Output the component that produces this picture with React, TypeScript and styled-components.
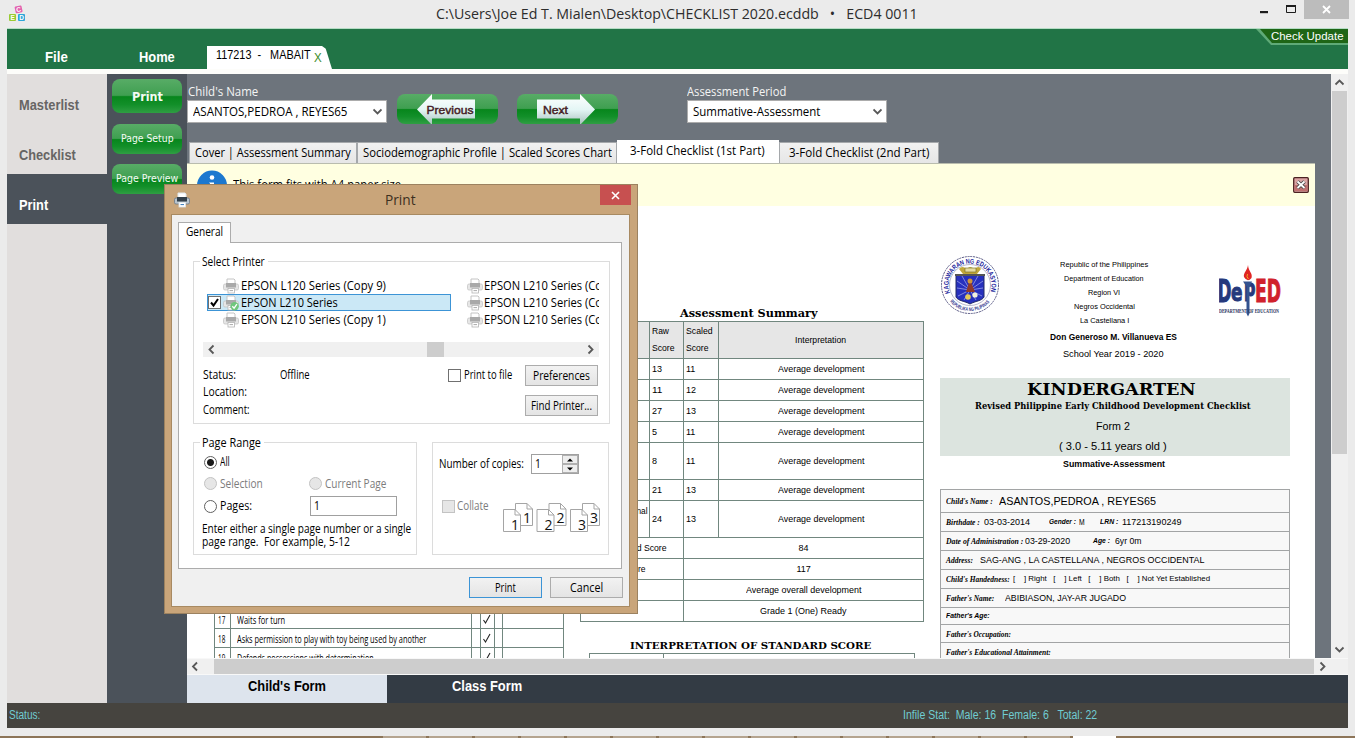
import React, { useLayoutEffect, useRef, useState } from "react";
import styled, { createGlobalStyle, css } from "styled-components";

const UI = `"Open Sans", "Noto Sans", sans-serif`;
const ARIAL = `"Liberation Sans", Arial, sans-serif`;
const SLAB = `"DejaVu Serif", serif`;
const TIMES = `"Liberation Serif", serif`;
const VERDANA = `"DejaVu Sans", sans-serif`;

const Global = createGlobalStyle`
  * { box-sizing: border-box; }
  body { margin: 0; overflow: hidden; background: #ebebeb; font-family: ${UI}; }
`;

/* ---------- text that always takes the given width ---------- */

const FitBox = styled.span<{ $w: number; $size: number; $font: string; $bold?: boolean; $italic?: boolean; $color: string; $ml: number; $y: number }>`
  display: block;
  flex: none;
  width: ${(p) => p.$w}px;
  height: ${(p) => p.$size + 4}px;
  line-height: ${(p) => p.$size + 4}px;
  margin-left: ${(p) => p.$ml}px;
  font-family: ${(p) => p.$font};
  font-size: ${(p) => p.$size}px;
  font-weight: ${(p) => (p.$bold ? 700 : 400)};
  font-style: ${(p) => (p.$italic ? "italic" : "normal")};
  color: ${(p) => p.$color};
  transform: translateY(${(p) => p.$y}px);
`;
const FitInner = styled.span`
  display: inline-block;
  white-space: pre;
  transform-origin: 0 50%;
`;

type FitProps = { w: number; size?: number; font?: string; bold?: boolean; italic?: boolean; color?: string; ml?: number; y?: number; children: string };
function Fit({ w, size = 12, font = UI, bold, italic, color = "#000", ml = 0, y = 0, children }: FitProps) {
  const ref = useRef<HTMLSpanElement>(null);
  const [scale, setScale] = useState(1);
  useLayoutEffect(() => {
    if (ref.current) setScale(w / ref.current.offsetWidth);
  }, [w, children]);
  return (
    <FitBox $w={w} $size={size} $font={font} $bold={bold} $italic={italic} $color={color} $ml={ml} $y={y}>
      <FitInner ref={ref} style={{ transform: `scaleX(${scale})` }}>{children}</FitInner>
    </FitBox>
  );
}

const Gap = styled.span<{ $w: number }>`
  flex: none;
  width: ${(p) => p.$w}px;
`;

/* ---------- window frame ---------- */

const Window = styled.div`
  width: 1355px;
  height: 738px;
  display: flex;
  flex-direction: column;
  background: #ebebeb;
  position: relative;
  overflow: hidden;
`;
const TitleBar = styled.header`
  height: 28px;
  flex: none;
  display: flex;
  padding: 0 6px 0 8px;
`;
const TitleText = styled.div`
  display: flex;
  align-items: center;
  padding-left: 409px;
`;
const AppLogo = styled.svg`
  width: 19px;
  height: 18px;
  margin-top: 5px;
`;
const WindowButtons = styled.div`
  display: flex;
  height: 19px;
  margin-left: auto;
`;
const Chrome = styled.svg`
  width: 44px;
  height: 19px;
`;
const CloseBox = styled.div`
  width: 45px;
  background: #bcbcbc;
  display: flex;
  align-items: center;
  justify-content: center;
`;
const Client = styled.div`
  margin: 0 7px;
  width: 1341px;
  flex: none;
  display: flex;
  flex-direction: column;
`;
const Ribbon = styled.nav`
  height: 41px;
  border-top: 1px solid #b5dcc4;
  background: #217446;
  display: flex;
  align-items: flex-end;
`;
const DocTab = styled.div`
  width: 125px;
  height: 23px;
  margin-left: 32px;
  background: #fff;
  clip-path: polygon(0 0, 92% 0, 95% 12%, 100% 100%, 0 100%);
  display: flex;
  align-items: flex-start;
  padding-left: 9px;
`;
const UpdateTag = styled.div`
  align-self: flex-start;
  margin-left: auto;
  width: 92px;
  height: 16px;
  background: #5faa77;
  clip-path: polygon(0 0, 100% 0, 100% 100%, 15px 100%);
`;
const UpdateInner = styled.div`
  height: 14px;
  background: #1e6516;
  clip-path: polygon(4px 0, 100% 0, 100% 100%, 16px 100%);
  padding-left: 15px;
  display: flex;
  align-items: center;
`;
const Body = styled.div`
  margin-top: 5px;
  height: 629px;
  display: flex;
  position: relative;
  &::before { content: ""; position: absolute; left: 0; right: 0; top: -5px; height: 5px; background: #fdfdfa; }
`;

/* ---------- left navigation ---------- */

const Sidebar = styled.aside`
  width: 100px;
  background: #e1dedd;
`;
const NavItem = styled.div<{ $active?: boolean }>`
  height: 50px;
  padding: 10px 0 0 12px;
  display: flex;
  align-items: center;
  ${(p) => p.$active && css`background: #4b525a;`}
`;
const Tools = styled.div`
  width: 80px;
  background: #4b525a;
  padding: 5px;
`;
const glossy = css`
  background: linear-gradient(#58ac66 0%, #3f9f51 48%, #07861c 52%, #128f29 75%, #2f9e43 100%);
  border-radius: 8px;
`;
const ToolButton = styled.button<{ $h: number; $gap: number }>`
  ${glossy}
  border: 0;
  padding: 0;
  width: 70px;
  height: ${(p) => p.$h}px;
  margin-bottom: ${(p) => p.$gap}px;
  display: flex;
  align-items: center;
  justify-content: center;
`;

/* ---------- workspace ---------- */

const Work = styled.main`
  width: 1161px;
  display: flex;
  flex-direction: column;
`;
const Viewport = styled.div`
  height: 584px;
  display: flex;
`;
const Canvas = styled.div`
  width: 1144px;
  background: #6d747c;
`;
const Filters = styled.div`
  height: 66px;
  display: flex;
`;
const Field = styled.label<{ $ml?: number }>`
  width: 200px;
  padding-top: 10px;
  margin-left: ${(p) => p.$ml ?? 0}px;
  display: flex;
  flex-direction: column;
`;
const Combo = styled.div`
  height: 23px;
  background: #fff;
  border: 1px solid #acacac;
  display: flex;
  align-items: center;
  justify-content: space-between;
  padding: 0 4px 0 5px;
`;
const ArrowButton = styled.button<{ $ml: number }>`
  ${glossy}
  border: 0;
  padding: 0;
  width: 101px;
  height: 30px;
  margin: 20px 0 0 ${(p) => p.$ml}px;
`;
const Tabs = styled.div`
  height: 23px;
  display: flex;
  align-items: flex-end;
  padding-left: 2px;
`;
const Tab = styled.div<{ $w: number; $active?: boolean }>`
  width: ${(p) => p.$w}px;
  height: ${(p) => (p.$active ? 23 : 21)}px;
  background: ${(p) => (p.$active ? "#fff" : "linear-gradient(#f1f1f1,#e6e6e6)")};
  border: 1px solid ${(p) => (p.$active ? "#fff" : "#a5a8ab")};
  border-bottom: 0;
  display: flex;
  align-items: center;
  justify-content: center;
  padding: ${(p) => (p.$active ? "0 2px 3px 0" : "0")};
`;
const Sheet = styled.section`
  width: 1128px;
  height: 495px;
  background: #fff;
  overflow: hidden;
`;
const Notice = styled.div`
  height: 43px;
  background: #ffffe1;
  border-top: 1px solid #b9bcae;
  display: flex;
  padding: 6px 6px 0 9px;
`;
const NoticeClose = styled.svg`
  width: 16px;
  height: 16px;
  margin: 7px 0 0 auto;
`;
const Columns = styled.div`
  display: flex;
  align-items: flex-start;
`;

const VScroll = styled.div`
  width: 17px;
  height: 584px;
  background: #f0f0f0;
  display: flex;
  flex-direction: column;
  align-items: center;
`;
const VThumb = styled.div`
  width: 15px;
  height: 363px;
  background: #cdcdcd;
`;
const Arrow = styled.svg<{ $w: number; $h: number }>`
  width: ${(p) => p.$w}px;
  height: ${(p) => p.$h}px;
  flex: none;
  display: block;
`;
const HScroll = styled.div`
  height: 17px;
  background: #f0f0f0;
  border-top: 1px solid #f8f8f8;
  border-bottom: 1px solid #f8f8f8;
  display: flex;
`;
const HThumb = styled.div`
  width: 1100px;
  background: #cdcdcd;
`;
const BottomTabs = styled.div`
  height: 28px;
  background: #333b44;
  display: flex;
`;
const BottomTab = styled.div<{ $active?: boolean }>`
  width: 200px;
  padding-top: 2px;
  display: flex;
  justify-content: center;
  background: ${(p) => (p.$active ? "#dde4ed" : "#333b44")};
`;
const StatusBar = styled.footer`
  height: 25px;
  background: #46443f;
  display: flex;
  align-items: center;
  padding-left: 2px;
`;
const Taskbar = styled.div`
  margin-top: auto;
  height: 2px;
  background: #8d7558;
  padding-left: 383px;
  display: flex;
  gap: 3px;
`;
const TaskItem = styled.i<{ $on?: boolean }>`
  width: 43px;
  background: ${(p) => (p.$on ? "#fff" : "#b5a48f")};
`;

/* ---------- checklist columns ---------- */

const line = "1px solid #71877f";
const SkillTable = styled.div`
  width: 350px;
  margin: 404px 0 0 27px;
  border-left: ${line};
`;
const SkillRow = styled.div`
  height: 19px;
  display: flex;
  border-bottom: ${line};
`;
const SkillCell = styled.div<{ $w: number }>`
  width: ${(p) => p.$w}px;
  border-right: ${line};
  display: flex;
  align-items: center;
  flex: none;
  overflow: hidden;
`;
const Summary = styled.div`
  width: 344px;
  margin-left: 16px;
  padding-top: 98px;
  display: flex;
  flex-direction: column;
`;
const ScoreTable = styled.div`
  border: ${line};
  border-bottom: 0;
  border-right: 0;
`;
const ScoreRow = styled.div<{ $h: number; $head?: boolean }>`
  height: ${(p) => p.$h}px;
  display: flex;
  border-bottom: ${line};
  background: ${(p) => (p.$head ? "#e6e6e6" : "#fff")};
`;
const ScoreCell = styled.div<{ $w: number; $end?: boolean; $left?: boolean }>`
  width: ${(p) => p.$w}px;
  border-right: ${line};
  display: flex;
  flex-direction: column;
  justify-content: center;
  gap: 4px;
  align-items: ${(p) => (p.$left ? "flex-start" : p.$end ? "flex-end" : "center")};
  padding: ${(p) => (p.$left ? "0 0 0 2px" : p.$end ? "0 1px 0 0" : "0")};
`;
const StandardTable = styled.div`
  width: 326px;
  height: 20px;
  margin-left: 9px;
  border: ${line};
`;
const StandardSplit = styled.div`
  width: 74px;
  height: 20px;
  border-right: ${line};
`;
const Profile = styled.div`
  width: 350px;
  margin-left: 16px;
  padding-top: 49px;
`;
const Letterhead = styled.div`
  height: 123px;
  display: flex;
  align-items: flex-start;
`;
const LetterLines = styled.div`
  width: 208px;
  padding-top: 3px;
  display: flex;
  flex-direction: column;
  align-items: center;
`;
const Line = styled.div<{ $h: number }>`
  height: ${(p) => p.$h}px;
  display: flex;
  align-items: center;
`;
const Banner = styled.div`
  height: 78px;
  background: #dce4df;
  display: flex;
  flex-direction: column;
  align-items: center;
  padding: 1px 0 0 0;
`;
const Period = styled.div`
  height: 33px;
  display: flex;
  justify-content: center;
  padding-top: 2px;
`;
const InfoTable = styled.div`
  border: 1px solid #a2a4a5;
  background: #f8f8f8;
`;
const InfoRow = styled.div<{ $h: number }>`
  height: ${(p) => p.$h}px;
  border-bottom: 1px solid #a2a4a5;
  display: flex;
  align-items: center;
  padding-left: 5px;
`;

/* ---------- print dialog ---------- */

const Dialog = styled.div`
  position: absolute;
  left: 164px;
  top: 184px;
  width: 474px;
  height: 430px;
  background: #c9a57a;
  border: 1px solid #9c8260;
  padding: 0 7px 7px 6px;
  z-index: 2;
`;
const DialogTitle = styled.div`
  height: 29px;
  display: flex;
`;
const DialogClose = styled.div`
  width: 31px;
  height: 20px;
  margin-left: auto;
  margin-right: -1px;
  background: #c75050;
  display: flex;
  align-items: center;
  justify-content: center;
`;
const DialogBody = styled.div`
  height: 393px;
  background: #f0f0f0;
  border: 1px solid #a88a62;
  padding: 7px 6px 0 6px;
`;
const GeneralTab = styled.div`
  width: 53px;
  height: 21px;
  background: #fff;
  border: 1px solid #acacac;
  border-bottom: 0;
  position: relative;
  z-index: 1;
  margin-bottom: -1px;
  padding: 1px 0 0 7px;
`;
const Pane = styled.div`
  width: 444px;
  height: 327px;
  background: #fff;
  border: 1px solid #acacac;
  padding: 18px 0 0 14px;
`;
const Group = styled.fieldset<{ $w: number; $h: number }>`
  position: relative;
  margin: 0;
  min-width: 0;
  padding: 0;
  width: ${(p) => p.$w}px;
  height: ${(p) => p.$h}px;
  border: 1px solid #dcdcdc;
`;
const GroupLabel = styled.div`
  position: absolute;
  left: 6px;
  top: -8px;
  background: #fff;
  padding-right: 3px;
`;
const PrinterList = styled.div`
  margin: 15px 0 0 9px;
  width: 396px;
  height: 52px;
  display: flex;
  gap: 11px;
  overflow: hidden;
`;
const PrinterColumn = styled.div`
  width: 248px;
  flex: none;
`;
const Printer = styled.div<{ $on?: boolean; $ind: number }>`
  height: 17px;
  margin-left: 4px;
  width: 244px;
  display: flex;
  align-items: center;
  padding-left: ${(p) => p.$ind}px;
  border: 1px solid ${(p) => (p.$on ? "#3c94d6" : "transparent")};
  background: ${(p) => (p.$on ? "#cbe8f6" : "none")};
`;
const ListScroll = styled.div`
  margin: 13px 0 0 9px;
  width: 396px;
  height: 15px;
  background: #f0f0f0;
  display: flex;
`;
const ListThumb = styled.div`
  width: 17px;
  margin: 0 auto 0 207px;
  background: #cdcdcd;
`;
const StatusArea = styled.div`
  display: flex;
  margin: 8px 0 0 9px;
`;
const StatusColumn = styled.div<{ $w: number }>`
  width: ${(p) => p.$w}px;
`;
const Check = styled.span<{ $off?: boolean }>`
  width: 13px;
  height: 13px;
  flex: none;
  border: 1px solid ${(p) => (p.$off ? "#c3c3c3" : "#707070")};
  background: ${(p) => (p.$off ? "#e6e6e6" : "#fff")};
  display: flex;
`;
const Radio = styled.span<{ $off?: boolean; $on?: boolean }>`
  width: 13px;
  height: 13px;
  flex: none;
  border-radius: 50%;
  border: 1px solid ${(p) => (p.$off ? "#c3c3c3" : "#606060")};
  background: ${(p) => (p.$off ? "#e6e6e6" : p.$on ? "radial-gradient(#1a1a1a 0 3px, #fff 4px)" : "#fff")};
`;
const PushButton = styled.button<{ $primary?: boolean }>`
  width: 73px;
  height: 21px;
  padding: 0;
  flex: none;
  border: 1px solid ${(p) => (p.$primary ? "#3c94d6" : "#acacac")};
  background: linear-gradient(#f2f2f2, #e4e4e4);
  display: flex;
  align-items: center;
  justify-content: center;
`;
const ButtonStack = styled.div`
  display: flex;
  flex-direction: column;
  gap: 9px;
`;
const Lower = styled.div`
  margin-top: 18px;
  display: flex;
  gap: 15px;
`;
const Option = styled.div<{ $h: number; $pl?: number }>`
  height: ${(p) => p.$h}px;
  display: flex;
  align-items: center;
  padding-left: ${(p) => p.$pl ?? 0}px;
`;
const TextInput = styled.div<{ $w: number; $ml: number }>`
  width: ${(p) => p.$w}px;
  height: 20px;
  margin-left: ${(p) => p.$ml}px;
  border: 1px solid #a0a0a0;
  background: #fff;
  display: flex;
  align-items: center;
  padding-left: 3px;
`;
const Spinner = styled.div`
  width: 16px;
  height: 18px;
  margin: 0 0 0 auto;
  display: flex;
  flex-direction: column;
`;
const SpinKey = styled.div`
  flex: 1;
  border: 1px solid #b0b0b0;
  background: #eee;
  display: flex;
  align-items: center;
  justify-content: center;
`;
const Pages = styled.svg`
  width: 98px;
  height: 32px;
  margin: 24px 0 0 14px;
`;
const Actions = styled.div`
  margin-top: 8px;
  display: flex;
  justify-content: flex-end;
  gap: 8px;
`;

/* ---------- drawings ---------- */

const Chevron = ({ dir, w, h }: { dir: "u" | "d" | "l" | "r"; w: number; h: number }) => {
  const d = { u: "M-4 2L0 -2L4 2", d: "M-4 -2L0 2L4 -2", l: "M2 -4L-2 0L2 4", r: "M-2 -4L2 0L-2 4" }[dir];
  return (
    <Arrow $w={w} $h={h} viewBox={`${-w / 2} ${-h / 2} ${w} ${h}`}>
      <path d={d} fill="none" stroke="#585858" strokeWidth="1.800" />
    </Arrow>
  );
};

const PrinterIcon = ({ dark, ok }: { dark?: boolean; ok?: boolean }) => {
  const body = dark ? "#6c7a86" : "#c5c5c5";
  return (
    <Arrow $w={16} $h={16} viewBox="0 0 16 16">
      <path d="M4 5V1h7l1 1v3" fill="#fff" stroke={dark ? "#dfe6ec" : "#c4c4c4"} />
      <rect x="0.5" y="6" width="15" height="6" rx="1.5" fill={dark ? "#b9c4cd" : "#e6e6e6"} stroke={body} strokeWidth=".8" />
      <rect x="3" y="5" width="10" height="4.5" fill={dark ? "#33404b" : "#a9a9a9"} />
      <rect x="5" y="10.5" width="6.5" height="4.5" fill="#fff" stroke={dark ? "#dfe6ec" : "#b4b4b4"} strokeWidth=".8" />
      <path d="M6.5 12.6h3.5" stroke={dark ? "#3477b5" : "#aaa"} />
      {ok && <circle cx="11.6" cy="11.3" r="4.2" fill="#6fc67c" />}
      {ok && <path d="M9.3 11.2l1.8 2 2.8-4" fill="none" stroke="#fff" strokeWidth="1.3" />}
    </Arrow>
  );
};

const ArrowLabel = ({ text, flip }: { text: string; flip?: boolean }) => (
  <Arrow $w={101} $h={30} viewBox="0 0 101 30">
    <defs>
      <linearGradient id={flip ? "silverR" : "silverL"} x1="0" x2="0" y1="0" y2="1">
        <stop offset="0" stopColor="#fff" />
        <stop offset=".5" stopColor="#e4f6f5" />
        <stop offset="1" stopColor="#a8bfbc" />
      </linearGradient>
    </defs>
    <path
      d={flip ? "M20 5.5H63V0L78 15.5L63 31V24.500H20Z" : "M20 15.5L35 0V5.500H78V24.500H35V31Z"}
      fill={`url(#${flip ? "silverR" : "silverL"})`}
    />
    <text x={flip ? 26 : 29.5} y="20" fontFamily={ARIAL} fontSize="11.500" textLength={flip ? 25 : 47} lengthAdjust="spacingAndGlyphs" fill="#451b24" stroke="#451b24" strokeWidth=".45">{text}</text>
  </Arrow>
);

const Seal = () => (
  <Arrow $w={60} $h={60} viewBox="0 0 60 60">
    <defs>
      <path id="sealTop" d="M10 37.900A21.500 21.500 0 1 1 50 37.900" />
      <path id="sealBottom" d="M10 46.600A26 26 0 0 0 50 46.600" />
    </defs>
    <circle cx="30" cy="30" r="28.500" fill="#fff" stroke="#5b5b86" strokeWidth="1" strokeDasharray="2 .8" />
    <circle cx="30" cy="30" r="20.500" fill="#fff" stroke="#8888ab" strokeWidth=".6" />
    <text fontFamily={ARIAL} fontWeight="700" fontSize="6.800" fill="#1b1e9c"><textPath href="#sealTop" textLength="82" lengthAdjust="spacingAndGlyphs">KAGAWARAN NG EDUKASYON</textPath></text>
    <text fontFamily={ARIAL} fontWeight="700" fontSize="5" fill="#34388e"><textPath href="#sealBottom" textLength="45" lengthAdjust="spacingAndGlyphs">REPUBLIKA NG PILIPINAS</textPath></text>
    <path d="M16 20H44V42C42 46 35 46 30 49C25 46 18 46 16 42Z" fill="#2730bd" stroke="#222a66" />
    <path d="M30 35L17 26M30 35L22 21M30 35L38 21M30 35L43 26M30 35L17 33M30 35L43 33M30 35L18 41M30 35L24 45M30 35L36 45M30 35L42 41" stroke="#a9b1ee" strokeWidth=".7" />
    <path d="M19 14Q22 10 27 14Q30 10 34 14Q39 10 41 14L37 19H23Z" fill="#c2a83a" />
    <path d="M25 13h11v4h-11z" fill="#e6dca0" stroke="#6c6420" strokeWidth=".6" />
    <path d="M26 37L30 24L35 37Z" fill="#8f3a2c" />
    <circle cx="30" cy="26" r="2.500" fill="#d0963a" />
    <circle cx="28" cy="42" r="2.800" fill="#e5ca58" />
    <circle cx="35" cy="40" r="2.600" fill="#f2f0dd" />
    <path d="M15 20H45" stroke="#555" strokeWidth="2" />
  </Arrow>
);

const DepEd = () => (
  <Arrow $w={62} $h={54} viewBox="0 0 62 54">
    <g fontFamily={VERDANA} fontWeight="700" strokeWidth="1">
      <text x="-1.500" y="37.500" fontSize="31.500" textLength="14" lengthAdjust="spacingAndGlyphs" fill="#25397c" stroke="#25397c">D</text>
      <text x="12" y="37" fontSize="25" textLength="11.500" lengthAdjust="spacingAndGlyphs" fill="#25397c" stroke="#25397c">e</text>
      <text x="25" y="32" fontSize="23" textLength="11.500" lengthAdjust="spacingAndGlyphs" fill="#25397c" stroke="#25397c">p</text>
      <text x="36" y="37.500" fontSize="31.500" textLength="26" lengthAdjust="spacingAndGlyphs" fill="#d0212c" stroke="#d0212c">ED</text>
    </g>
    <path d="M24 17.500h9l-2.500 5v27l-1.500 3-1.500-3V22.500Z" fill="#33538f" />
    <path d="M29 1C28.500 6 24 9 25 13Q28.500 19 32.500 14C34 9 29.500 8 29 1Z" fill="#e02524" />
    <path d="M28.500 10Q27 13 29.500 15" stroke="#f5a623" fill="none" />
    <text x="0" y="48.500" fontFamily={TIMES} fontWeight="700" fontSize="7" textLength="60" lengthAdjust="spacingAndGlyphs" fill="#26315c">DEPARTMENT OF EDUCATION</text>
  </Arrow>
);

const PAGE_SETS = [1, 2, 3];
const PageStack = () => (
  <Pages viewBox="0 0 98 32">
    {PAGE_SETS.map((n, i) => (
      <g key={n} transform={`translate(${i * 33.500} 0)`} fill="#fff" stroke="#a5a5a5">
        <path d="M12.500 1.500H24L29.500 7V23.500H12.500Z" />
        <path d="M24 1.500V7H29.500" fill="none" />
        <text x="20" y="21" fontFamily={UI} fontSize="14" fill="#111" stroke="none">{n}</text>
        <path d="M.5 7.500H12L17.500 13V29.500H.5Z" />
        <path d="M12 7.500V13H17.500" fill="none" />
        <text x="8" y="27.500" fontFamily={UI} fontSize="14" fill="#111" stroke="none">{n}</text>
      </g>
    ))}
  </Pages>
);

/* ---------- data ---------- */

const SKILLS: [string, string, number][] = [
  ["17", "Waits for turn", 48],
  ["18", "Asks permission to play with toy being used by another", 189],
  ["19", "Defends possessions with determination", 137],
];
const SCORES: [number, string, string, string][] = [
  [21, "", "13", "11"],
  [21, "", "11", "12"],
  [21, "", "27", "13"],
  [21, "", "5", "11"],
  [37, "", "8", "11"],
  [21, "", "21", "13"],
  [37, "Socio-emotional", "24", "13"],
];
const TOTALS: [string, number, number, string, number][] = [
  ["Sum of Scaled Score", 82, 2, "84", 10],
  ["Standard Score", 60, 3, "117", 14],
  ["", 0, 0, "Average overall development", 115],
  ["", 0, 0, "Grade 1 (One) Ready", 87],
];

const SmallKey = (p: { w: number; children: string }) => <Fit w={p.w} size={8} font={TIMES} bold italic y={1}>{p.children}</Fit>;

export default function App() {
  return (
    <Window>
      <Global />
      <TitleBar>
        <AppLogo viewBox="0 0 19 18">
          <g fontFamily={ARIAL} fontWeight="700" fontSize="6.500" fill="#fff">
            <rect x="7" y="1" width="7" height="7" rx="1" fill="#e262ae" transform="rotate(-12 10 4)" />
            <text x="8" y="7" transform="rotate(-12 10 4)">C</text>
            <rect x="1" y="9" width="7" height="7" rx="1" fill="#9bcb33" />
            <text x="2.500" y="15">E</text>
            <rect x="10" y="9" width="7" height="7" rx="1" fill="#2ca6d9" />
            <text x="11.200" y="15">D</text>
          </g>
        </AppLogo>
        <TitleText>
          <Fit w={482} size={15} color="#2d2d2d" y={-1}>{"C:\\Users\\Joe Ed T. Mialen\\Desktop\\CHECKLIST 2020.ecddb   •   ECD4 0011"}</Fit>
        </TitleText>
        <WindowButtons>
          <Chrome viewBox="0 0 44 19">
            <rect x="0" y="11" width="8" height="2.200" fill="#1c1c1c" />
            <path d="M26.500 6V12.500H35.500V6" fill="none" stroke="#1c1c1c" />
            <rect x="26" y="5" width="10" height="2" fill="#1c1c1c" />
          </Chrome>
          <CloseBox>
            <Arrow $w={9} $h={9} viewBox="0 0 9 9"><path d="M1 1L8 8M8 1L1 8" stroke="#fff" strokeWidth="1.800" /></Arrow>
          </CloseBox>
        </WindowButtons>
      </TitleBar>

      <Client>
        <Ribbon>
          <Fit w={23} size={15} font={ARIAL} bold color="#fff" ml={38} y={-3}>File</Fit>
          <Fit w={36} size={15} font={ARIAL} bold color="#fff" ml={71} y={-3}>Home</Fit>
          <DocTab>
            <Fit w={95} size={12} font={ARIAL} y={1}>{"117213  -   MABAIT"}</Fit>
            <Fit w={8} size={13} font={ARIAL} color="#3e8e2c" ml={3} y={3}>X</Fit>
          </DocTab>
          <UpdateTag>
            <UpdateInner><Fit w={73} size={10.500} font={ARIAL} color="#fff">Check Update</Fit></UpdateInner>
          </UpdateTag>
        </Ribbon>

        <Body>
          <Sidebar>
            <NavItem><Fit w={60} size={15} font={ARIAL} bold color="#676564">Masterlist</Fit></NavItem>
            <NavItem><Fit w={57} size={15} font={ARIAL} bold color="#676564">Checklist</Fit></NavItem>
            <NavItem $active><Fit w={29} size={15} font={ARIAL} bold color="#fff">Print</Fit></NavItem>
          </Sidebar>
          <Tools>
            <ToolButton $h={34} $gap={11}><Fit w={31} size={13} font={VERDANA} bold color="#f4fbf4">Print</Fit></ToolButton>
            <ToolButton $h={30} $gap={10}><Fit w={53} size={10} font={VERDANA} color="#f4fbf4">Page Setup</Fit></ToolButton>
            <ToolButton $h={30} $gap={0}><Fit w={62} size={10} font={VERDANA} color="#f4fbf4">Page Preview</Fit></ToolButton>
          </Tools>

          <Work>
            <Viewport>
              <Canvas>
                <Filters>
                  <Field>
                    <Fit w={70} size={12} color="#f4f4f4" ml={1}>Child's Name</Fit>
                    <Combo><Fit w={154} size={12}>ASANTOS,PEDROA , REYES65</Fit><Chevron dir="d" w={9} h={9} /></Combo>
                  </Field>
                  <ArrowButton $ml={10}><ArrowLabel text="Previous" /></ArrowButton>
                  <ArrowButton $ml={19}><ArrowLabel text="Next" flip /></ArrowButton>
                  <Field $ml={69}>
                    <Fit w={99} size={12} color="#f4f4f4">Assessment Period</Fit>
                    <Combo><Fit w={127} size={12}>Summative-Assessment</Fit><Chevron dir="d" w={9} h={9} /></Combo>
                  </Field>
                </Filters>
                <Tabs>
                  <Tab $w={168}><Fit w={156} size={12}>Cover | Assessment Summary</Fit></Tab>
                  <Tab $w={260}><Fit w={249} size={12}>Sociodemographic Profile | Scaled Scores Chart</Fit></Tab>
                  <Tab $w={162} $active><Fit w={135} size={12}>3-Fold Checklist (1st Part)</Fit></Tab>
                  <Tab $w={160}><Fit w={140} size={12}>3-Fold Checklist (2nd Part)</Fit></Tab>
                </Tabs>
                <Sheet>
                  <Notice>
                    <Arrow $w={32} $h={32} viewBox="0 0 32 32">
                      <circle cx="16" cy="15.500" r="15" fill="#1c78cf" />
                      <circle cx="16" cy="7.500" r="2.300" fill="#fff" />
                      <path d="M13 12.500h5v10h-4v-9z" fill="#fff" />
                    </Arrow>
                    <Fit w={168} size={13} ml={5} y={6}>This form fits with A4 paper size</Fit>
                    <NoticeClose viewBox="0 0 16 16">
                      <rect x=".7" y=".7" width="14.600" height="14.600" rx="1" fill="#dba3a3" stroke="#4c2222" strokeWidth="1.300" />
                      <path d="M1.500 8h13v6h-13z" fill="#c07070" />
                      <path d="M4.500 4.500L11.500 11M11.500 4.500L4.500 11" stroke="#444" strokeWidth="3.600" />
                      <path d="M4.500 4.500L11.500 11M11.500 4.500L4.500 11" stroke="#fff" strokeWidth="1.800" />
                    </NoticeClose>
                  </Notice>
                  <Columns>
                    <SkillTable>
                      {SKILLS.map(([n, label, w]) => (
                        <SkillRow key={n}>
                          <SkillCell $w={16}><Fit w={7} size={10} ml={3} y={1}>{n}</Fit></SkillCell>
                          <SkillCell $w={241}><Fit w={w} size={10} ml={6} y={1}>{label}</Fit></SkillCell>
                          <SkillCell $w={9} />
                          <SkillCell $w={14}>
                            <Arrow $w={12} $h={12} viewBox="0 0 12 12"><path d="M2.500 7l2 3L9 2" fill="none" stroke="#222" strokeWidth="1.100" /></Arrow>
                          </SkillCell>
                          <SkillCell $w={8} />
                          <SkillCell $w={61} />
                        </SkillRow>
                      ))}
                    </SkillTable>

                    <Summary>
                      <Line $h={17}><Fit w={138} size={11.500} font={SLAB} bold ml={100} y={1}>Assessment Summary</Fit></Line>
                      <ScoreTable>
                        <ScoreRow $h={37} $head>
                          <ScoreCell $w={69} />
                          <ScoreCell $w={34} $left><Fit w={17} size={9} font={ARIAL}>Raw</Fit><Fit w={23} size={9} font={ARIAL}>Score</Fit></ScoreCell>
                          <ScoreCell $w={35} $left><Fit w={27} size={9} font={ARIAL}>Scaled</Fit><Fit w={23} size={9} font={ARIAL}>Score</Fit></ScoreCell>
                          <ScoreCell $w={205}><Fit w={51} size={9} font={ARIAL} ml={-2}>Interpretation</Fit></ScoreCell>
                        </ScoreRow>
                        {SCORES.map(([h, name, raw, scaled], i) => (
                          <ScoreRow $h={h} key={i}>
                            <ScoreCell $w={69} $end>{name && <Fit w={60} size={9} font={ARIAL} y={-8}>{name}</Fit>}</ScoreCell>
                            <ScoreCell $w={34} $left><Fit w={raw.length * 5} size={9} font={ARIAL}>{raw}</Fit></ScoreCell>
                            <ScoreCell $w={35} $left><Fit w={scaled === "11" ? 9 : 10} size={9} font={ARIAL}>{scaled}</Fit></ScoreCell>
                            <ScoreCell $w={205}><Fit w={86} size={9} font={ARIAL}>Average development</Fit></ScoreCell>
                          </ScoreRow>
                        ))}
                        {TOTALS.map(([name, w, ml, value, vw], i) => (
                          <ScoreRow $h={21} key={i}>
                            <ScoreCell $w={103} $left>{name && <Fit w={w} size={9} font={ARIAL} ml={ml}>{name}</Fit>}</ScoreCell>
                            <ScoreCell $w={240}><Fit w={vw} size={9} font={ARIAL}>{value}</Fit></ScoreCell>
                          </ScoreRow>
                        ))}
                      </ScoreTable>
                      <Line $h={31}><Fit w={241} size={10} font={SLAB} bold ml={50} y={8}>INTERPRETATION OF STANDARD SCORE</Fit></Line>
                      <StandardTable><StandardSplit /></StandardTable>
                    </Summary>

                    <Profile>
                      <Letterhead>
                        <Seal />
                        <LetterLines>
                          <Line $h={14}><Fit w={88} size={8} font={ARIAL}>Republic of the Philippines</Fit></Line>
                          <Line $h={14}><Fit w={80} size={8} font={ARIAL}>Department of Education</Fit></Line>
                          <Line $h={14}><Fit w={32} size={8} font={ARIAL}>Region VI</Fit></Line>
                          <Line $h={14}><Fit w={61} size={8} font={ARIAL}>Negros Occidental</Fit></Line>
                          <Line $h={14}><Fit w={49} size={8} font={ARIAL}>La Castellana I</Fit></Line>
                          <Line $h={18}><Fit w={127} size={9} font={ARIAL} bold ml={18}>Don Generoso M. Villanueva ES</Fit></Line>
                          <Line $h={17}><Fit w={101} size={9} font={ARIAL} ml={18}>School Year 2019 - 2020</Fit></Line>
                        </LetterLines>
                        <Line $h={72}><Gap $w={11} /><DepEd /></Line>
                      </Letterhead>
                      <Banner>
                        <Fit w={169} size={17.500} font={SLAB} bold ml={-7}>KINDERGARTEN</Fit>
                        <Fit w={276} size={9} font={SLAB} bold ml={-4} y={-1}>Revised Philippine Early Childhood Development Checklist</Fit>
                        <Line $h={20}><Fit w={34} size={11} font={ARIAL} ml={-4} y={3}>Form 2</Fit></Line>
                        <Line $h={20}><Fit w={108} size={11} font={ARIAL} ml={-4} y={3}>( 3.0 - 5.11 years old )</Fit></Line>
                      </Banner>
                      <Period><Fit w={102} size={9} font={ARIAL} bold ml={-2}>Summative-Assessment</Fit></Period>
                      <InfoTable>
                        <InfoRow $h={23}>
                          <SmallKey w={47}>Child's Name :</SmallKey>
                          <Fit w={157} size={11} font={ARIAL} ml={6}>ASANTOS,PEDROA , REYES65</Fit>
                        </InfoRow>
                        <InfoRow $h={19}>
                          <SmallKey w={34}>Birthdate :</SmallKey>
                          <Fit w={46} size={9} font={ARIAL} ml={4}>03-03-2014</Fit>
                          <Fit w={27} size={8} font={ARIAL} bold italic ml={19}>Gender :</Fit>
                          <Fit w={6} size={9} font={ARIAL} ml={3}>M</Fit>
                          <Fit w={18} size={8} font={ARIAL} bold italic ml={15}>LRN :</Fit>
                          <Fit w={59} size={9} font={ARIAL} ml={4}>117213190249</Fit>
                        </InfoRow>
                        <InfoRow $h={19}>
                          <SmallKey w={77}>Date of Administration :</SmallKey>
                          <Fit w={45} size={9} font={ARIAL} ml={2}>03-29-2020</Fit>
                          <Fit w={17} size={8} font={ARIAL} bold italic ml={23}>Age :</Fit>
                          <Fit w={27} size={9} font={ARIAL} ml={5}>6yr 0m</Fit>
                        </InfoRow>
                        <InfoRow $h={19}>
                          <SmallKey w={27}>Address:</SmallKey>
                          <Fit w={224} size={9} font={ARIAL} ml={7}>SAG-ANG , LA CASTELLANA , NEGROS OCCIDENTAL</Fit>
                        </InfoRow>
                        <InfoRow $h={19}>
                          <SmallKey w={64}>Child's Handedness:</SmallKey>
                          <Fit w={197} size={8} font={ARIAL} ml={3}>{"[    ] Right   [    ] Left   [    ] Both   [    ] Not Yet Established"}</Fit>
                        </InfoRow>
                        <InfoRow $h={19}>
                          <SmallKey w={48}>Father's Name:</SmallKey>
                          <Fit w={121} size={9} font={ARIAL} ml={11}>ABIBIASON, JAY-AR JUGADO</Fit>
                        </InfoRow>
                        <InfoRow $h={17}><Fit w={44} size={8} font={ARIAL} bold italic>Father's Age:</Fit></InfoRow>
                        <InfoRow $h={18}><SmallKey w={65}>Father's Occupation:</SmallKey></InfoRow>
                        <InfoRow $h={18}><SmallKey w={105}>Father's Educational Attainment:</SmallKey></InfoRow>
                      </InfoTable>
                    </Profile>
                  </Columns>
                </Sheet>
              </Canvas>
              <VScroll>
                <Chevron dir="u" w={17} h={17} />
                <VThumb />
                <Line $h={187} />
                <Chevron dir="d" w={17} h={17} />
              </VScroll>
            </Viewport>
            <HScroll>
              <Chevron dir="l" w={16} h={15} />
              <Gap $w={11} />
              <HThumb />
              <Chevron dir="r" w={17} h={15} />
            </HScroll>
            <BottomTabs>
              <BottomTab $active><Fit w={78} size={14} font={ARIAL} bold>Child's Form</Fit></BottomTab>
              <BottomTab><Fit w={70} size={14} font={ARIAL} bold color="#fff">Class Form</Fit></BottomTab>
            </BottomTabs>
          </Work>
        </Body>
        <StatusBar>
          <Fit w={31} size={12} font={ARIAL} color="#70ccd2" y={-1}>Status:</Fit>
          <Fit w={194} size={12} font={ARIAL} color="#70ccd2" ml={863} y={-1}>{"Infile Stat:  Male: 16  Female: 6   Total: 22"}</Fit>
        </StatusBar>
      </Client>
      <Taskbar>
        {Array.from({ length: 16 }, (_, i) => <TaskItem key={i} $on={i === 15} />)}
      </Taskbar>

      <Dialog>
        <DialogTitle>
          <Line $h={29}><Gap $w={3} /><PrinterIcon dark /></Line>
          <Fit w={31} size={15} color="#3c2f20" ml={195} y={5}>Print</Fit>
          <DialogClose>
            <Arrow $w={9} $h={9} viewBox="0 0 9 9"><path d="M1 1L8 8M8 1L1 8" stroke="#fff" strokeWidth="1.600" /></Arrow>
          </DialogClose>
        </DialogTitle>
        <DialogBody>
          <GeneralTab><Fit w={37} size={12}>General</Fit></GeneralTab>
          <Pane>
            <Group $w={417} $h={163}>
              <GroupLabel><Fit w={63} size={12} ml={2}>Select Printer</Fit></GroupLabel>
              <PrinterList>
                <PrinterColumn>
                  <Printer $ind={15}><PrinterIcon /><Fit w={145} size={12} ml={2}>EPSON L120 Series (Copy 9)</Fit></Printer>
                  <Printer $on $ind={0}>
                    <Check><Arrow $w={11} $h={11} viewBox="0 0 11 11"><path d="M2 5.500l2.500 3L9 2" fill="none" stroke="#000" strokeWidth="2" /></Arrow></Check>
                    <Gap $w={2} />
                    <PrinterIcon ok /><Fit w={97} size={12} ml={2}>EPSON L210 Series</Fit>
                  </Printer>
                  <Printer $ind={15}><PrinterIcon /><Fit w={145} size={12} ml={2}>EPSON L210 Series (Copy 1)</Fit></Printer>
                </PrinterColumn>
                <PrinterColumn>
                  {[2, 3, 4].map((n) => (
                    <Printer key={n} $ind={0}><PrinterIcon /><Fit w={143} size={12} ml={1}>{`EPSON L210 Series (Copy ${n})`}</Fit></Printer>
                  ))}
                </PrinterColumn>
              </PrinterList>
              <ListScroll>
                <Chevron dir="l" w={17} h={15} />
                <ListThumb />
                <Chevron dir="r" w={17} h={15} />
              </ListScroll>
              <StatusArea>
                <StatusColumn $w={77}>
                  <Line $h={18}><Fit w={33} size={12} y={1}>Status:</Fit></Line>
                  <Line $h={17}><Fit w={44} size={12}>Location:</Fit></Line>
                  <Line $h={18}><Fit w={47} size={12} y={1}>Comment:</Fit></Line>
                </StatusColumn>
                <StatusColumn $w={168}><Line $h={18}><Fit w={30} size={12} y={1}>Offline</Fit></Line></StatusColumn>
                <StatusColumn $w={77}><Line $h={20}><Check /><Fit w={48} size={12} ml={3}>Print to file</Fit></Line></StatusColumn>
                <ButtonStack>
                  <PushButton><Fit w={57} size={12}>Preferences</Fit></PushButton>
                  <PushButton><Fit w={61} size={12}>Find Printer...</Fit></PushButton>
                </ButtonStack>
              </StatusArea>
            </Group>
            <Lower>
              <Group $w={224} $h={113}>
                <GroupLabel><Fit w={59} size={12} ml={2}>Page Range</Fit></GroupLabel>
                <Line $h={8} />
                <Option $h={22} $pl={10}><Radio $on /><Fit w={10} size={12} ml={3}>All</Fit></Option>
                <Option $h={21} $pl={10}>
                  <Radio $off /><Fit w={43} size={12} ml={3} color="#7c7c7c">Selection</Fit>
                  <Gap $w={46} />
                  <Radio $off /><Fit w={61} size={12} ml={3} color="#7c7c7c">Current Page</Fit>
                </Option>
                <Option $h={24} $pl={10}><Radio /><Fit w={32} size={12} ml={3}>Pages:</Fit><TextInput $w={87} $ml={58}><Fit w={6} size={12}>1</Fit></TextInput></Option>
                <Option $h={19} $pl={8}><Fit w={209} size={12} y={1}>Enter either a single page number or a single</Fit></Option>
                <Option $h={9} $pl={8}><Fit w={148} size={12}>{"page range.  For example, 5-12"}</Fit></Option>
              </Group>
              <Group $w={177} $h={113}>
                <Line $h={11} />
                <Option $h={20} $pl={6}>
                  <Fit w={85} size={12}>Number of copies:</Fit>
                  <TextInput $w={48} $ml={7}>
                    <Fit w={6} size={12}>1</Fit>
                    <Spinner>
                      <SpinKey><Arrow $w={6} $h={4} viewBox="0 0 6 4"><path d="M0 3.500L3 .5L6 3.500Z" /></Arrow></SpinKey>
                      <SpinKey><Arrow $w={6} $h={4} viewBox="0 0 6 4"><path d="M0 .5L3 3.500L6 .5Z" /></Arrow></SpinKey>
                    </Spinner>
                  </TextInput>
                </Option>
                <Line $h={20} />
                <Option $h={24} $pl={9}>
                  <Check $off /><Fit w={32} size={12} ml={2} color="#7c7c7c">Collate</Fit>
                  <Line $h={48}><PageStack /></Line>
                </Option>
              </Group>
            </Lower>
          </Pane>
          <Actions>
            <PushButton $primary><Fit w={21} size={12}>Print</Fit></PushButton>
            <PushButton><Fit w={33} size={12}>Cancel</Fit></PushButton>
          </Actions>
        </DialogBody>
      </Dialog>
    </Window>
  );
}
